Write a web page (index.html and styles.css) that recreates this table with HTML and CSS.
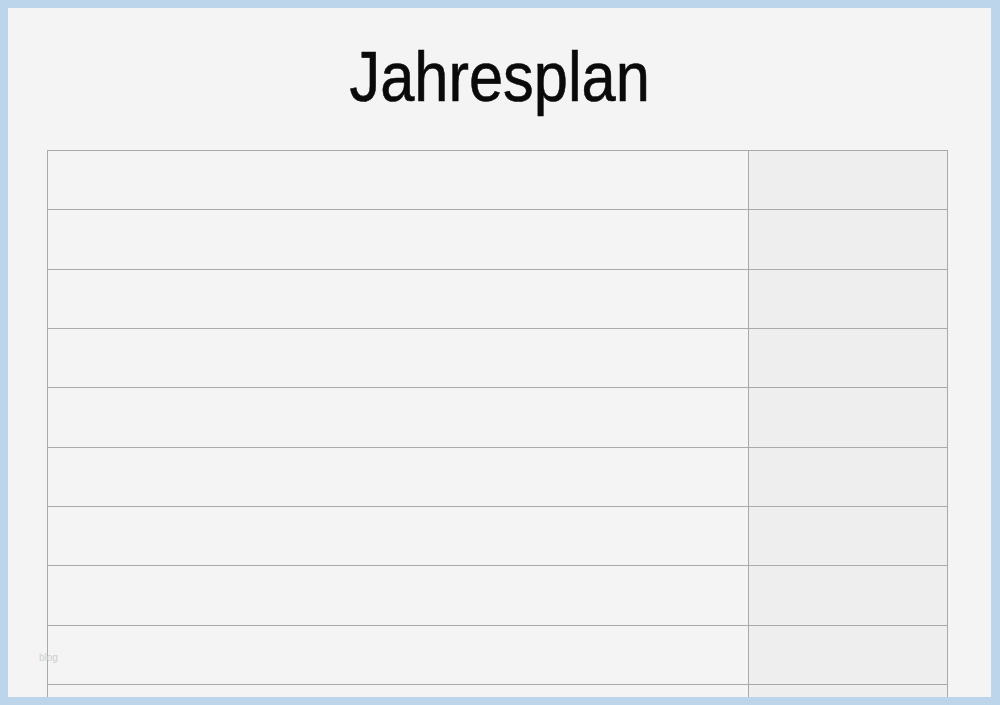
FILE: index.html
```html
<!DOCTYPE html>
<html lang="de">
<head>
<meta charset="utf-8">
<title>Jahresplan</title>
<link rel="stylesheet" href="styles.css">
</head>
<body>
<div class="page">
  <h1 class="title"><span class="title-text">Jahresplan</span></h1>
  <div class="plan">
    <div class="row"><div class="cell"></div><div class="cell side"></div></div>
    <div class="row"><div class="cell"></div><div class="cell side"></div></div>
    <div class="row"><div class="cell"></div><div class="cell side"></div></div>
    <div class="row"><div class="cell"></div><div class="cell side"></div></div>
    <div class="row"><div class="cell"></div><div class="cell side"></div></div>
    <div class="row"><div class="cell"></div><div class="cell side"></div></div>
    <div class="row"><div class="cell"></div><div class="cell side"></div></div>
    <div class="row"><div class="cell"></div><div class="cell side"></div></div>
    <div class="row"><div class="cell"></div><div class="cell side"></div></div>
    <div class="row"><div class="cell"></div><div class="cell side"></div></div>
  </div>
  <span class="mark">blog</span>
</div>
</body>
</html>
```

FILE: styles.css
```css
html, body {
  margin: 0;
  padding: 0;
  background: #bdd5ea;
}

.page {
  position: relative;
  width: 1000px;
  height: 705px;
  box-sizing: border-box;
  border: 8px solid #bdd5ea;
  border-right-width: 9px;
  background: #f4f4f4;
  overflow: hidden;
  padding-top: 33px;
}

.title {
  margin: 0;
  text-align: center;
  font-family: "Liberation Sans", Arial, sans-serif;
  font-weight: normal;
  font-size: 71px;
  line-height: 71px;
  color: #0a0a0a;
}

.title-text {
  display: inline-block;
  transform: scaleX(0.865);
  transform-origin: 50% 50%;
  margin-left: 1px;
  -webkit-text-stroke: 0.6px #0a0a0a;
}

.plan {
  margin: 38px 0 0 39px;
  width: 901px;
  box-sizing: border-box;
  border-left: 1px solid #aaa;
  border-right: 1px solid #aaa;
}

.row {
  display: grid;
  grid-template-columns: 700px 1fr;
  height: 59.33px;
  box-sizing: border-box;
  border-top: 1px solid #aaa;
}

.cell {
  background: #f4f4f4;
}

.cell.side {
  background: #eeeeee;
  border-left: 1px solid #aaa;
}

.mark {
  position: absolute;
  left: 31px;
  top: 644px;
  font-family: "Liberation Sans", Arial, sans-serif;
  font-size: 10px;
  color: #cfcfcf;
}
```
